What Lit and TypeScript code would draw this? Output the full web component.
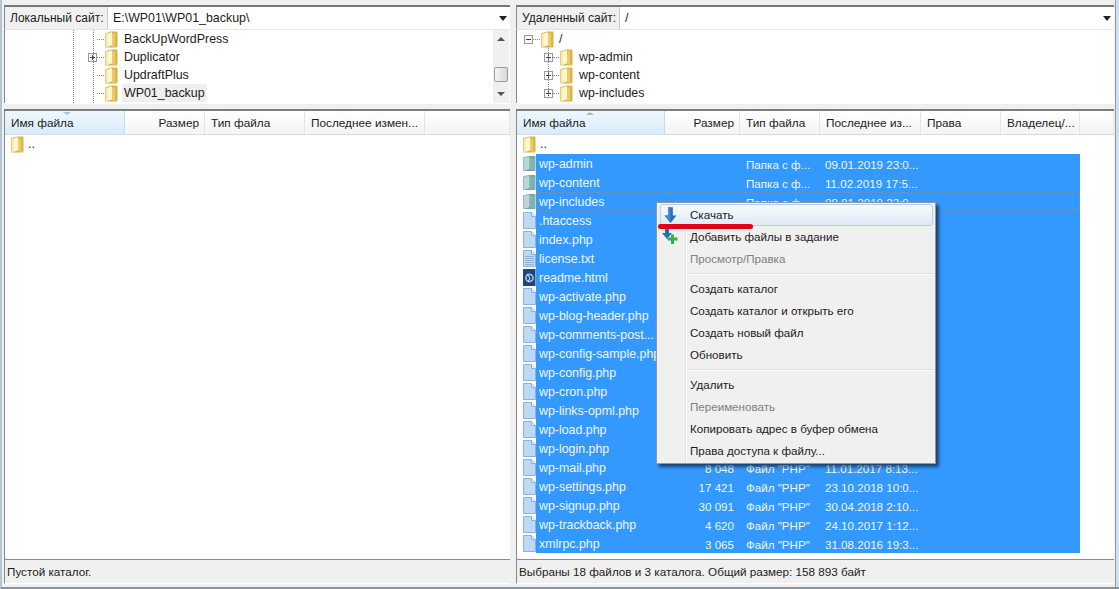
import { LitElement, html, css, svg } from "lit";
import { customElement } from "lit/decorators.js";

const folder = (sel = false) => html`<svg class="ico" width="14" height="17" viewBox="0 0 14 17">
  ${sel
    ? svg`<path d="M1 2.5 L7 1 H12.5 Q13.5 1 13.5 2 V15 Q13.5 16 12.5 16 H2 Q1 16 1 15Z" fill="#6fa5a5"/>
      <path d="M1.5 3 L7.5 1.5 V14 L1.5 16Z" fill="#b9d6d8"/>
      <path d="M8 3 H13 V15 H8Z" fill="#7fb2b2"/>`
    : svg`<path d="M1 2.5 L7 .5 H12.5 Q13.5 .5 13.5 1.5 V15 Q13.5 16.5 12.5 16.5 H2 Q1 16.5 1 15.5Z" fill="#d8b24a"/>
      <path d="M1.5 3 L8 1 V14.5 L1.5 16.5Z" fill="#f8e9a8"/>
      <path d="M3.5 3 L8 1.5 V14 L3.5 15.5Z" fill="#fff6d2"/>
      <path d="M8 2.5 H13 V15.5 H8Z" fill="#ecca66"/>
      <path d="M11 2.5 H13 V15.5 H11Z" fill="#d9b44c"/>`}
</svg>`;

const page = (lines = false) => html`<svg class="ico" width="14" height="17" viewBox="0 0 14 17">
  <path d="M1.5 .5 H9.5 L13.5 4.5 V16.5 H1.5Z" fill="#bcd9f8" stroke="#8fb0cf"/>
  <path d="M9.5 .5 V4.5 H13.5" fill="#e3f0fd" stroke="#8fb0cf"/>
  ${lines
    ? svg`<path d="M3 6.5H12M3 8.5H12M3 10.5H12M3 12.5H12M3 14.5H12" stroke="#8fb4dc" stroke-width="1"/>`
    : ""}
</svg>`;

const htmlIcon = html`<svg class="ico" width="14" height="17" viewBox="0 0 14 17">
  <rect x="1" y="0" width="12.5" height="17" fill="#20457f"/>
  <circle cx="7.5" cy="9" r="3.6" fill="none" stroke="#9cc4ea" stroke-width="1.6"/>
  <path d="M5 5 L8 9 L6 13" fill="none" stroke="#e6f1fb" stroke-width="1"/>
</svg>`;

const downIcon = html`<svg width="13" height="17" viewBox="0 0 14 18">
  <path d="M4.5 0 H9.5 V9 H13.5 L7 17 L.5 9 H4.5Z" fill="#2b6db5"/>
  <path d="M4.5 0 H7 V15 L.5 9 H4.5Z" fill="#3f8ad2"/>
</svg>`;

const addIcon = html`<svg width="18" height="18" viewBox="0 0 18 18">
  <path d="M3 0 H7 V5 H10 L5 11 L0 5 H3Z" fill="#2b6db5"/>
  <path d="M9 6.5 H12 V9.5 H15.5 V12.5 H12 V16 H9 V12.5 H5.5 V9.5 H9Z" fill="#35b04a"/>
</svg>`;

const box = (open: boolean) => html`<span class="twist">
  <svg width="9" height="9" viewBox="0 0 9 9">
    <rect x=".5" y=".5" width="8" height="8" fill="#fafafa" stroke="#9a9a9a"/>
    <path d="${open ? "M2 4.5H7" : "M2 4.5H7M4.5 2V7"}" stroke="#444"/>
  </svg></span>`;

type Row = { n: string; k: "d" | "f" | "t" | "h"; s?: string; ty: string; dt: string };
const P = 'Файл "PHP"';
const rows: Row[] = [
  { n: "wp-admin", k: "d", ty: "Папка с ф...", dt: "09.01.2019 23:0..." },
  { n: "wp-content", k: "d", ty: "Папка с ф...", dt: "11.02.2019 17:5..." },
  { n: "wp-includes", k: "d", ty: "Папка с ф...", dt: "09.01.2019 23:0..." },
  { n: ".htaccess", k: "f", ty: "", dt: "" },
  { n: "index.php", k: "f", ty: "", dt: "" },
  { n: "license.txt", k: "t", ty: "", dt: "" },
  { n: "readme.html", k: "h", ty: "", dt: "" },
  { n: "wp-activate.php", k: "f", ty: "", dt: "" },
  { n: "wp-blog-header.php", k: "f", ty: "", dt: "" },
  { n: "wp-comments-post...", k: "f", ty: "", dt: "" },
  { n: "wp-config-sample.php", k: "f", ty: "", dt: "" },
  { n: "wp-config.php", k: "f", ty: "", dt: "" },
  { n: "wp-cron.php", k: "f", ty: "", dt: "" },
  { n: "wp-links-opml.php", k: "f", ty: "", dt: "" },
  { n: "wp-load.php", k: "f", ty: "", dt: "" },
  { n: "wp-login.php", k: "f", ty: "", dt: "" },
  { n: "wp-mail.php", k: "f", s: "8 048", ty: P, dt: "11.01.2017 8:13..." },
  { n: "wp-settings.php", k: "f", s: "17 421", ty: P, dt: "23.10.2018 10:0..." },
  { n: "wp-signup.php", k: "f", s: "30 091", ty: P, dt: "30.04.2018 2:10..." },
  { n: "wp-trackback.php", k: "f", s: "4 620", ty: P, dt: "24.10.2017 1:12..." },
  { n: "xmlrpc.php", k: "f", s: "3 065", ty: P, dt: "31.08.2016 19:3..." },
];

const iconFor = (k: Row["k"]) =>
  k === "d" ? folder(true) : k === "t" ? page(true) : k === "h" ? htmlIcon : page();

@customElement("app-root")
export class AppRoot extends LitElement {
  static styles = css`
    :host {
      display: block;
      width: 1119px;
      height: 589px;
      position: relative;
      overflow: hidden;
      font-family: "Liberation Sans", "Noto Sans", sans-serif;
      font-size: 12.4px;
      color: #1c1c1c;
    }
    .win {
      box-sizing: border-box;
      height: 589px;
      width: 1119px;
      padding: 5px 0 3px 2px;
      background: #f0f0f0;
      border-left: 2px solid #b5c4d0;
      border-bottom: 2px solid #8a9299;
      display: grid;
      grid-template-columns: 512px 599px 1fr;
    }
    .edge { background: #cfe2f5; border-left: 1px solid #999; margin: -5px 0 -3px 0; }
    .pane { display: flex; flex-direction: column; min-width: 0; box-sizing: border-box; }
    .pane.left { padding-right: 6px; }
    .pane.right { padding-right: 1px; }
    .bar {
      display: flex;
      height: 22px;
      flex: none;
      border-top: 2px solid #777;
      border-left: 1px solid #888;
      background: #fff;
    }
    .bar .lbl {
      background: #f0f0f0;
      padding-left: 5px;
      line-height: 22px;
      width: 103px;
      font-size: 12px;
      white-space: nowrap;
      box-sizing: border-box;
      border-right: 1px solid #c9c9c9;
    }
    .bar .path { flex: 1; line-height: 22px; padding-left: 5px; }
    .bar .arrow {
      align-self: center;
      width: 0;
      height: 0;
      margin-right: 3px;
      border: 4px solid transparent;
      border-top: 5px solid #222;
      border-bottom: 0;
    }
    .tree {
      height: 74px;
      flex: none;
      position: relative;
      background: #fff;
      border-left: 1px solid #888;
      border-top: 1px solid #e4e4e4;
      box-sizing: border-box;
      display: flex;
    }
    .nodes { flex: 1; }
    .node { display: flex; align-items: center; height: 18px; }
    .twist { width: 9px; height: 9px; display: flex; flex: none; }
    .twist.none { visibility: hidden; }
    .conn { width: 7px; flex: none; border-top: 1px dotted #888; }
    .node.child .conn { width: 6px; }
    .node .ico { flex: none; }
    .name { margin-left: 4px; padding: 0 2px; line-height: 18px; }
    .node.root .name { margin-left: 3px; }
    .name.cur { background: #efefef; }
    .left .node { padding-left: 83px; }
    .node.root { padding-left: 7px; }
    .node.child { padding-left: 27px; }
    .guide {
      position: absolute;
      top: 0;
      width: 0;
      border-left: 1px dotted #888;
    }
    .g1 { left: 68px; bottom: 0; }
    .g2 { left: 88px; bottom: 0; }
    .g3 { left: 31px; top: 16px; bottom: 8px; }
    .sb {
      width: 16px;
      margin-right: 1px;
      background: #f0f0f0;
      display: flex;
      flex-direction: column;
      align-items: center;
      justify-content: space-between;
      padding: 7px 0;
      box-sizing: border-box;
      position: relative;
    }
    .sb i { width: 0; height: 0; border: 4px solid transparent; }
    .sb .up { border-bottom: 4px solid #555; border-top: 0; }
    .sb .dn { border-top: 4px solid #555; border-bottom: 0; }
    .thumb {
      position: absolute;
      top: 37px;
      left: 1px;
      width: 14px;
      height: 15px;
      box-sizing: border-box;
      border: 1px solid #9a9a9a;
      border-radius: 2px;
      background: linear-gradient(90deg, #f4f4f4, #d8d8d8);
    }
    .split { height: 6px; flex: none; border-top: 1px solid #fff; box-sizing: border-box; }
    .list {
      flex: 1;
      min-height: 0;
      background: #fff;
      border-top: 2px solid #7d7d7d;
      border-left: 1px solid #888;
      display: flex;
      flex-direction: column;
    }
    .head {
      height: 23px;
      display: grid;
      font-size: 11.8px;
      background: linear-gradient(#fff, #f3f4f5);
      border-bottom: 1px solid #d8dde2;
      position: relative;
      flex: none;
    }
    .left .head { grid-template-columns: 120px 80px 100px 120px 1fr; }
    .right .head { grid-template-columns: 148px 75px 80px 101px 80px 79px 1fr; }
    .head span {
      line-height: 24px;
      padding-left: 6px;
      border-right: 1px solid #e3e5e7;
      white-space: nowrap;
      overflow: hidden;
    }
    .head span:last-child { border-right: 0; }
    .head .sorted {
      background: linear-gradient(#eef7fd, #d9ecf9);
      border-right: 1px solid #c5dcec;
    }
    .head .size { text-align: right; padding: 0 5px 0 0; }
    .sort {
      position: absolute;
      top: 1px;
      width: 0;
      height: 0;
      border: 4px solid transparent;
    }
    .left .sort { left: 58px; border-top: 3px solid #a9c4d6; border-bottom: 0; }
    .right .sort { left: 69px; border-bottom: 3px solid #a9b6c0; border-top: 0; }
    .body { flex: 1; min-height: 0; }
    .row {
      height: 19px;
      display: flex;
      align-items: center;
    }
    .row .ico { flex: none; margin-left: 5px; }
    .up-name { margin-left: 4px; line-height: 19px; }
    .sel {
      display: grid;
      grid-template-columns: 129px 75px 80px 101px 159px;
      width: 544px;
      height: 19px;
      background: #3399ff;
      color: #eef6ff;
      line-height: 19px;
      box-sizing: border-box;
    }
    .sel.focus { outline: 1px solid #5f93c9; outline-offset: -1px; }
    .sel span { padding-top: 1px; padding-left: 3px; height: 18px; white-space: nowrap; overflow: hidden; }
    .sel .sz { text-align: right; padding-right: 6px; padding-left: 0; font-size: 11.6px; }
    .sel .ty { padding-left: 6px; font-size: 11.6px; }
    .sel .dt { padding-left: 5px; font-size: 11.6px; }
    .status {
      height: 23px;
      flex: none;
      font-size: 11.7px;
      background: #f0f0f0;
      border-top: 1px solid #8c8c8c;
      border-left: 1px solid #888;
      border-bottom: 1px solid #fff;
      line-height: 24px;
      padding-left: 2px;
    }
    .menu {
      position: absolute;
      left: 656px;
      top: 202px;
      width: 280px;
      box-sizing: border-box;
      padding: 1px 2px;
      font-size: 11.6px;
      background: #f0f0f0;
      border: 1px solid #979797;
      box-shadow: 3px 3px 3px rgba(0, 0, 0, 0.55);
      color: #1c1c1c;
    }
    .gutter {
      position: absolute;
      left: 28px;
      top: 1px;
      bottom: 1px;
      border-left: 1px solid #e0e1e1;
      border-right: 1px solid #fff;
    }
    .item {
      height: 22px;
      display: flex;
      align-items: center;
      position: relative;
      margin-left: 1px;
      box-sizing: border-box;
      line-height: 20px;
      border: 1px solid transparent;
      border-radius: 3px;
    }
    .item.hot {
      background: linear-gradient(#f6fafd, #dfeaf6);
      border-color: #aecff7;
    }
    .item.off { color: #808080; }
    .item .mi { width: 29px; flex: none; display: flex; justify-content: center; position: relative; left: -5px; }
    .sep { height: 8px; display: flex; align-items: center; margin-left: 28px; position: relative; }
    .sep::before { content: ""; flex: 1; border-top: 1px solid #dcdcdc; border-bottom: 1px solid #fff; }
    .mark {
      position: absolute;
      left: 658px;
      top: 224px;
      width: 95px;
      height: 5px;
      border-radius: 3px;
      background: #e2001a;
    }
  `;

  private menuItem(t: string, cls = "", icon: unknown = "") {
    return html`<div class="item ${cls}"><span class="mi">${icon}</span>${t}</div>`;
  }

  render() {
    return html`
      <div class="win">
        <section class="pane left">
          <div class="bar">
            <span class="lbl">Локальный сайт:</span>
            <span class="path">E:\\WP01\\WP01_backup\\</span>
            <span class="arrow"></span>
          </div>
          <div class="tree">
            <span class="guide g1"></span>
            <span class="guide g2"></span>
            <div class="nodes">
              <div class="node"><span class="twist none"></span><span class="conn"></span>${folder()}<span class="name">BackUpWordPress</span></div>
              <div class="node">${box(false)}<span class="conn"></span>${folder()}<span class="name">Duplicator</span></div>
              <div class="node"><span class="twist none"></span><span class="conn"></span>${folder()}<span class="name">UpdraftPlus</span></div>
              <div class="node"><span class="twist none"></span><span class="conn"></span>${folder()}<span class="name cur">WP01_backup</span></div>
            </div>
            <div class="sb"><i class="up"></i><span class="thumb"></span><i class="dn"></i></div>
          </div>
          <div class="split"></div>
          <div class="list">
            <div class="head">
              <span class="sorted">Имя файла</span><span class="size">Размер</span><span>Тип файла</span><span>Последнее измен...</span><span></span>
              <i class="sort"></i>
            </div>
            <div class="body">
              <div class="row">${folder()}<span class="up-name">..</span></div>
            </div>
          </div>
          <div class="status">Пустой каталог.</div>
        </section>
        <section class="pane right">
          <div class="bar">
            <span class="lbl">Удаленный сайт:</span>
            <span class="path">/</span>
            <span class="arrow"></span>
          </div>
          <div class="tree">
            <span class="guide g3"></span>
            <div class="nodes">
              <div class="node root">${box(true)}<span class="conn"></span>${folder()}<span class="name">/</span></div>
              <div class="node child">${box(false)}<span class="conn"></span>${folder()}<span class="name">wp-admin</span></div>
              <div class="node child">${box(false)}<span class="conn"></span>${folder()}<span class="name">wp-content</span></div>
              <div class="node child">${box(false)}<span class="conn"></span>${folder()}<span class="name">wp-includes</span></div>
            </div>
          </div>
          <div class="split"></div>
          <div class="list">
            <div class="head">
              <span class="sorted">Имя файла</span><span class="size">Размер</span><span>Тип файла</span><span>Последнее из...</span><span>Права</span><span>Владелец/...</span><span></span>
              <i class="sort"></i>
            </div>
            <div class="body">
              <div class="row">${folder()}<span class="up-name">..</span></div>
              ${rows.map(
                (r) => html`<div class="row">
                  ${iconFor(r.k)}
                  <div class="sel ${r.n === "wp-includes" ? "focus" : ""}">
                    <span>${r.n}</span><span class="sz">${r.s ?? ""}</span><span class="ty">${r.ty}</span><span class="dt">${r.dt}</span><span></span>
                  </div>
                </div>`
              )}
            </div>
          </div>
          <div class="status">Выбраны 18 файлов и 3 каталога. Общий размер: 158 893 байт</div>
        </section>
        <div class="edge"></div>
      </div>
      <div class="menu">
        <span class="gutter"></span>
        ${this.menuItem("Скачать", "hot", downIcon)}
        ${this.menuItem("Добавить файлы в задание", "", addIcon)}
        ${this.menuItem("Просмотр/Правка", "off")}
        <div class="sep"></div>
        ${this.menuItem("Создать каталог")}
        ${this.menuItem("Создать каталог и открыть его")}
        ${this.menuItem("Создать новый файл")}
        ${this.menuItem("Обновить")}
        <div class="sep"></div>
        ${this.menuItem("Удалить")}
        ${this.menuItem("Переименовать", "off")}
        ${this.menuItem("Копировать адрес в буфер обмена")}
        ${this.menuItem("Права доступа к файлу...")}
      </div>
      <div class="mark"></div>
    `;
  }
}
